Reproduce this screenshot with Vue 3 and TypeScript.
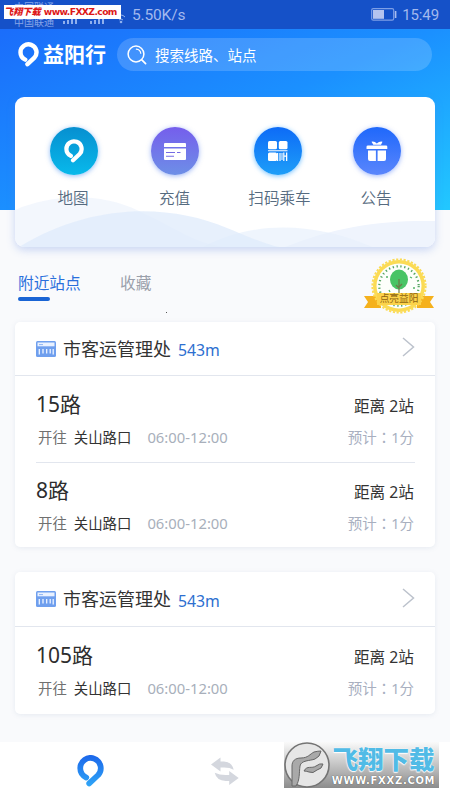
<script setup lang="ts">
interface Route { name: string; dest: string; hours: string; stops: number; eta: number }
interface Station { name: string; distance: string; routes: Route[] }

const line = (name: string): Route => ({ name, dest: '关山路口', hours: '06:00-12:00', stops: 2, eta: 1 })

const stations: Station[] = [
  { name: '市客运管理处', distance: '543m', routes: [line('15路'), line('8路')] },
  { name: '市客运管理处', distance: '543m', routes: [line('105路')] },
]

const actions = [
  { id: 'map', label: '地图' },
  { id: 'pay', label: '充值' },
  { id: 'scan', label: '扫码乘车' },
  { id: 'news', label: '公告' },
]

const markPath = 'M8.6 20.6C5 18.8 3 15.8 3 12a9.5 9.5 0 1 1 16.6 6.2L11.3 26'
</script>

<template>
  <div class="screen">
    <div class="status">
      <div class="carriers"><span>中国联通</span><span>中国联通</span></div>
      <svg class="signals" width="64" height="12" viewBox="0 0 64 12" fill="#8fb0ee">
        <path d="M0 8h2v3H0zM4 7h2v4H4zM8 6h2v5H8zM12 5h2v6h-2zM27 8h2v3h-2zM31 7h2v4h-2zM35 6h2v5h-2zM39 5h2v6h-2z" />
        <path d="M54 4q4-4 8 0M56 7q2-2 4 0" fill="none" stroke="#8fb0ee" />
        <circle cx="58" cy="9" r="1.3" />
      </svg>
      <span class="speed">5.50K/s</span>
      <svg class="battery" width="26" height="13" viewBox="0 0 26 13">
        <rect x=".7" y=".7" width="22" height="11.4" rx="1.6" fill="none" stroke="#7d9fe6" stroke-width="1.2" />
        <rect x="2" y="2" width="11" height="8.8" fill="#b4c4ef" />
        <path d="M24.6 3v7" stroke="#a9bdee" stroke-width="1.6" />
      </svg>
      <span class="clock">15:49</span>
      <div class="stamp"><b class="stamp-cn">飞翔下载</b><b class="stamp-url">www.FXXZ.com</b></div>
    </div>

    <header class="hero">
      <div class="topbar">
        <svg class="brand-mark" width="21" height="25" viewBox="0 0 25 29">
          <path :d="markPath" fill="none" stroke="#fff" stroke-width="5.3" stroke-linecap="round" stroke-linejoin="round" />
        </svg>
        <b class="brand">益阳行</b>
        <div class="search">
          <svg width="20" height="20" viewBox="0 0 20 20" fill="none" stroke="#fff" stroke-linecap="round">
            <circle cx="9" cy="9" r="7.9" stroke-width="1.5" />
            <path d="M14.8 14.8 18.6 18.6" stroke-width="1.7" />
            <path d="M9.3 4.1a5 5 0 0 1 4.5 4.3" stroke-width="1.1" />
          </svg>
          <span>搜索线路、站点</span>
        </div>
      </div>

      <nav class="panel">
        <svg class="waves" width="420" height="55" viewBox="0 0 420 55" preserveAspectRatio="none">
          <path d="M0 18C35 3 82-1 124 19S178 50 208 55H0z" fill="#f0f5fd" fill-opacity=".8" />
          <path d="M270 55C320 35 365 28 420 29V55z" fill="#eff4fd" />
          <path d="M188 55C235 30 295 28 357 55z" fill="#e7f0fc" fill-opacity=".65" />
          <path d="M4 55C78 10 155 12 212 36S265 55 282 55z" fill="#dfebfb" fill-opacity=".75" />
        </svg>
        <div v-for="a in actions" :key="a.id" class="action" :class="a.id">
          <span class="disc">
            <svg v-if="a.id === 'map'" width="20" height="24" viewBox="0 0 25 29">
              <path :d="markPath" fill="none" stroke="#fff" stroke-width="5.3" stroke-linecap="round" stroke-linejoin="round" />
            </svg>
            <svg v-else-if="a.id === 'pay'" width="22" height="17" viewBox="0 0 22 17">
              <path d="M1 0h20q1 0 1 1v3H0V1q0-1 1-1zM0 5.5h22V16q0 1-1 1H1q-1 0-1-1z" fill="#fff" />
              <path d="M2 9.5h9M13 9.5h3.5M2 13.2h8" stroke="#746be4" stroke-width="1.1" />
            </svg>
            <svg v-else-if="a.id === 'scan'" width="20" height="20" viewBox="0 0 20 20" fill="#fff">
              <rect x="0" y="0" width="9" height="8.3" rx="1.5" />
              <rect x="10.8" y="0" width="8.7" height="8.3" rx="1.5" />
              <path d="M0 9.2h19.5v1H0z" />
              <rect x="0" y="11.5" width="9" height="8.5" rx="1.5" />
              <path d="M9 12h1.2v8H9zM11.4 12h1.2v8h-1.2zM13.5 12h1v7h-1zM15.2 11.5h1.2V20h-1.2zM18 11.5h1.3V20H18zM16.4 14.5h1.8v1.3h-1.8z" />
            </svg>
            <svg v-else width="22" height="20" viewBox="0 0 22 20" fill="#fff">
              <path d="M5.5.7Q8.5 0 10.8 2.4 13.5 0 16.5.7L15 3.8H7.3z" />
              <path d="M2 4.5h18q1.3 0 1.3 1.3V8H.5V5.8Q.5 4.5 2 4.5zM2 9.4h7.9V20H4q-2 0-2-2zM11.6 9.4H20V18q0 2-2 2h-6.4z" />
            </svg>
          </span>
          <span class="label">{{ a.label }}</span>
        </div>
      </nav>
    </header>

    <div class="tabs">
      <span class="tab active">附近站点</span>
      <span class="tab">收藏</span>
      <i class="speck"></i>
      <div class="badge">
        <svg width="72" height="58" viewBox="0 0 72 58">
          <path d="M1 39h17v12H1l4-6zM71 39H54v12h17l-4-6z" fill="#f5b11d" />
          <circle cx="36" cy="29" r="26" fill="#fbdb55" />
          <circle cx="36" cy="29" r="26.6" fill="none" stroke="#fbdb55" stroke-width="2" stroke-dasharray="2.2 1.6" />
          <circle cx="36" cy="29" r="22.5" fill="#fdfffb" />
          <circle cx="36" cy="29" r="19.7" fill="none" stroke="#56a563" stroke-width="2.2" stroke-dasharray="1.3 2.6" />
          <path d="M26 33l1 2M47 20l2 1M50 31h2M23 20h2" stroke="#55b568" stroke-width="1.3" />
          <ellipse cx="36" cy="22.5" rx="9" ry="10" fill="#49c465" />
          <path d="M36 22v17M36 31l-3-3M36 30l3-3" stroke="#6e7a48" stroke-width="1.2" fill="none" />
          <rect x="14" y="36" width="44" height="12" fill="#fcd34a" />
        </svg>
        <span>点亮益阳</span>
      </div>
    </div>

    <main class="list">
      <section v-for="(s, i) in stations" :key="i" class="station">
        <div class="station-head">
          <svg width="20" height="16" viewBox="0 0 20 16">
            <rect width="20" height="16" rx="1.5" fill="#6f9fee" />
            <path d="M1.5 1.5h17v3.8h-17z" fill="#e9f1ff" />
            <path d="M3 3.6h4" stroke="#8eb3f1" stroke-width="1" />
            <path d="M3.3 8v5.5M7 8v4.5M10.7 8v4.5M14.2 8v4.5M17.2 8v5.5" stroke="#eef4ff" stroke-width="1.3" />
          </svg>
          <span class="station-name">{{ s.name }}</span>
          <span class="distance">{{ s.distance }}</span>
          <svg class="chev" width="13" height="20" viewBox="0 0 13 20">
            <path d="M1 1l10.5 9L1 19" fill="none" stroke="#bcc2cc" stroke-width="1.5" />
          </svg>
        </div>
        <div v-for="r in s.routes" :key="r.name" class="route">
          <div class="row top">
            <span class="route-name">{{ r.name }}</span>
            <span class="stops">距离 {{ r.stops }}站</span>
          </div>
          <div class="row sub">
            <span class="to">开往</span>
            <span class="dest">{{ r.dest }}</span>
            <span class="hours">{{ r.hours }}</span>
            <span class="eta">预计<span class="colon">：</span>{{ r.eta }}分</span>
          </div>
        </div>
      </section>
    </main>

    <footer class="tabbar">
      <svg class="nav-home" width="27" height="32" viewBox="0 0 25 29">
        <defs>
          <linearGradient id="mark" gradientUnits="userSpaceOnUse" x1="12" y1="0" x2="12" y2="29">
            <stop offset="0" stop-color="#1c67ea" /><stop offset="1" stop-color="#2fa6f7" />
          </linearGradient>
        </defs>
        <path :d="markPath" fill="none" stroke="url(#mark)" stroke-width="5.3" stroke-linecap="round" stroke-linejoin="round" />
      </svg>
      <svg class="nav-swap" width="28" height="29" viewBox="0 0 28 29" fill="#d4d7de">
        <path d="M0 7.5 9.5.5v4H13q8 .5 9.7 8.3Q19 10.5 13 10.5H9.5v4z" />
        <path d="M27.7 21 18.2 28v-4H14.7Q5.500 23.500 3.700 15.700 8.500 18 14.700 18h3.500v-4z" />
      </svg>
      <div class="watermark">
        <svg width="46" height="46" viewBox="0 0 46 46">
          <circle cx="23" cy="23" r="22" fill="#e6e6e6" stroke="#747474" stroke-width="1.6" />
          <path d="M8 44V24c0-5 3-8 9-8 7 0 9-4 13-6q4-1 7-1-1 6-6 8c-5 2-14 1-15 7-1 7 0 14-4 20z" fill="#a9a9a9" stroke="#666" />
          <path d="M20 29c3-6 8-2 12-5q4-3 7-2-1 5-6 6-4 4-8 2-3-1-5-1z" fill="#a9a9a9" stroke="#666" />
        </svg>
        <div class="wm-text"><b class="wm-cn">飞翔下载</b><b class="wm-url">WWW.FXXZ.COM</b></div>
      </div>
    </footer>
  </div>
</template>

<style>
body { margin: 0; background: #fff; }
</style>

<style scoped>
.screen {
  width: 450px; height: 800px; overflow: hidden; display: flex; flex-direction: column;
  background: #f9fafc; font-family: "Noto Sans", "Noto Sans CJK SC", sans-serif; white-space: nowrap;
}
.screen svg { display: block; flex: none; }
.status {
  position: relative; flex: none; height: 29px; display: flex; align-items: center; box-sizing: border-box;
  padding: 0 11px 0 14px; background: #1551c8; color: #a3b9ee; font-family: Roboto, "Noto Sans CJK SC", sans-serif;
}
.carriers { display: flex; flex-direction: column; width: 49px; font-size: 10px; line-height: 15px; margin-top: 0; color: #86a5e8; }
.signals { margin-top: 8px; }
.speed { margin-left: 5px; font-size: 15.5px; letter-spacing: -.15px; }
.battery { margin-left: auto; }
.clock { margin-left: 5px; font-size: 15px; letter-spacing: -.1px; }
.stamp {
  position: absolute; left: 4px; top: 5px; width: 117px; height: 14px; background: #fff; color: #dd1717;
  display: flex; align-items: center; gap: 3px; line-height: 14px;
}
.stamp-cn { font-size: 9.2px; font-style: italic; font-weight: 900; }
.stamp-url { font: bold 9.2px/14px "DejaVu Sans", sans-serif; letter-spacing: -.6px; }
.hero {
  flex: none; height: 181px; box-sizing: border-box; padding: 9px 15px 0;
  background: linear-gradient(157deg, #1b6dfb 0%, #1b90ff 50%, #22c8ff 100%);
}
.topbar { display: flex; align-items: center; height: 33px; padding-left: 3px; }
.brand { margin-left: 4px; width: 74px; color: #fff; font-size: 21px; line-height: 33px; }
.search {
  flex: none; width: 315px; height: 33px; box-sizing: border-box; border-radius: 17px; padding-left: 10px;
  display: flex; align-items: center; gap: 8px; background: rgba(255, 255, 255, .17); color: #fff; font-size: 14.5px;
}
.search span { margin-top: -1px; }
.panel {
  position: relative; overflow: hidden; margin-top: 26px; height: 150px; box-sizing: border-box; padding: 30px 22px 0 14px;
  border-radius: 9px; background: #fff; box-shadow: 0 3px 8px rgba(90, 130, 225, .3);
  display: grid; grid-template-columns: 88px 115px 95px 98px; justify-content: start;
}
.waves { position: absolute; left: 0; bottom: 0; }
.action { display: flex; flex-direction: column; align-items: center; z-index: 1; }
.disc { width: 48px; height: 48px; border-radius: 50%; display: flex; align-items: center; justify-content: center; }
.map .disc { margin-left: 2px; background: linear-gradient(#078fd0, #08b9eb); box-shadow: 0 1px 5px rgba(30, 120, 240, .5); }
.pay .disc { background: linear-gradient(#755eec, #6d8fe7); box-shadow: 0 1px 5px rgba(60, 110, 240, .5); }
.scan .disc { margin-right: 4px; background: linear-gradient(#0d6bf7, #1e9ef8); box-shadow: 0 1px 5px rgba(20, 150, 255, .6); }
.news .disc { margin-left: 1px; background: linear-gradient(#1f68fb, #5a86fc); box-shadow: 0 1px 5px rgba(60, 110, 250, .5); }
.label { margin-top: 11px; font-size: 15.6px; line-height: 24px; color: #566b80; font-weight: 350; }
.tabs { position: relative; flex: none; height: 112px; box-sizing: border-box; padding: 61px 0 0 18px; display: flex; gap: 39px; font-size: 15.7px; line-height: 24px; color: #9aa0ab; }
.tab { width: 63px; height: 24px; }
.tab.active { color: #2a6fdc; }
.tab.active::after { content: ""; display: block; width: 32px; height: 4px; margin-top: 2px; border-radius: 2px; background: #1964d4; }
.speck { position: absolute; left: 166px; top: 102px; width: 1px; height: 1px; background: #555; }
.badge { position: absolute; left: 363px; top: 47px; }
.badge span { position: absolute; left: 0; width: 72px; top: 35px; text-align: center; font-size: 9.7px; line-height: 14px; color: #8d6410; }
.list { flex: none; height: 420px; padding: 0 15px; display: flex; flex-direction: column; gap: 25px; }
.station { border-radius: 5px; background: #fff; box-shadow: 0 1px 5px rgba(110, 130, 170, .13); }
.station-head { display: flex; align-items: center; height: 53px; padding: 0 20px 0 21px; border-bottom: 1px solid #e2e6ee; }
.station + .station .station-head { height: 54px; }
.station-name { margin-left: 7px; font-size: 18px; color: #333; line-height: 26px; }
.distance { margin: 3px 0 0 7px; font-size: 15.8px; color: #2d6fd0; line-height: 24px; }
.chev { margin: -3px 0 0 auto; }
.route { height: 86px; box-sizing: border-box; padding: 12px 20px 0 21px; }
.station + .station .route { height: 87px; }
.route + .route { height: 85px; }
.route + .route::before { content: ""; display: block; height: 1px; margin-top: -12px; margin-bottom: 11px; background: #e2e6ee; }
.row { display: flex; justify-content: space-between; align-items: center; }
.top { height: 32px; }
.route-name { font-size: 21px; line-height: 32px; color: #2d2d2d; }
.stops { margin: 4px 1px 0 0; font-size: 15.7px; line-height: 24px; color: #333; }
.sub { height: 24px; margin-top: 6px; font-size: 14.4px; line-height: 24px; color: #a8afbb; }
.to { margin-left: 2px; color: #707070; }
.dest { margin-left: 7px; color: #333; }
.hours { margin: -2px 0 0 16px; font-size: 14.8px; }
.eta { margin: -2px 1px 0 auto; font-size: 14.5px; color: #a8afbf; }
.colon { font-family: "Noto Sans CJK TC", sans-serif; }
.tabbar { position: relative; flex: none; height: 58px; background: #fff; display: flex; align-items: flex-start; }
.nav-home { margin: 13px 0 0 77px; }
.nav-swap { margin: 15px 0 0 107px; }
.watermark {
  margin-left: 45px; width: 155px; height: 46px; display: flex; align-items: center;
  background: linear-gradient(#fafafa, #c9c9c9 45%, #8c8c8c);
}
.wm-text { display: flex; flex-direction: column; align-items: center; width: 107px; }
.wm-cn { font-size: 25.5px; line-height: 31px; font-weight: 900; color: #51bbe6; text-shadow: 0 0 2px #fff, 0 1px 1px #fff; }
.wm-url { font: bold 10px/12px "DejaVu Sans", sans-serif; letter-spacing: .7px; color: #fff; text-shadow: 0 0 1px #333; }
</style>
